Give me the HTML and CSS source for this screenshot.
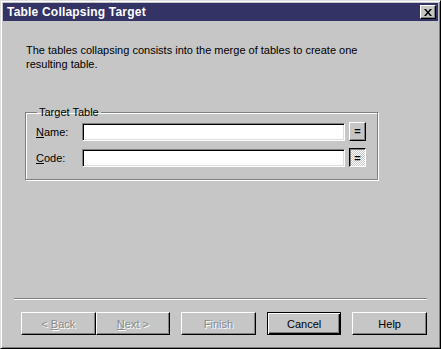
FILE: index.html
```html
<!DOCTYPE html>
<html lang="en">
<head>
    <meta charset="UTF-8">
    <meta name="viewport" content="width=device-width, initial-scale=1.0">
    <title>Table Collapsing Target</title>
    <link rel="stylesheet" href="styles.css">
</head>
<body>
    <div class="window">
        <div class="titlebar">
            <span class="title">Table Collapsing Target</span>
            <span class="close">
                <svg width="8" height="7" viewBox="0 0 8 7">
                    <path d="M0 0h2l2 2.5L6 0h2L5 3.5 8 7H6L4 4.5 2 7H0l3-3.5z" fill="#000"/>
                </svg>
            </span>
        </div>
        <div class="content">
            <p class="intro">The tables collapsing consists into the merge of tables to create one resulting table.</p>
            <fieldset class="group">
                <legend>Target Table</legend>
                <div class="row">
                    <label for="name"><u>N</u>ame:</label>
                    <input type="text" id="name">
                    <button class="eq">=</button>
                </div>
                <div class="row">
                    <label for="code"><u>C</u>ode:</label>
                    <input type="text" id="code">
                    <button class="eq pressed">=</button>
                </div>
            </fieldset>
        </div>
        <div class="footer">
            <div class="separator"></div>
            <div class="buttons">
                <button class="btn" disabled>&lt; <u>B</u>ack</button>
                <button class="btn next" disabled><u>N</u>ext &gt;</button>
                <button class="btn gap" disabled>Finish</button>
                <button class="btn gap default">Cancel</button>
                <button class="btn gap">Help</button>
            </div>
        </div>
    </div>
</body>
</html>
```

FILE: styles.css
```css
body {
    margin: 0;
    background: #c6c6c6;
    font-family: "Liberation Sans", Arial, sans-serif;
    font-size: 11px;
    color: #000;
}
.window {
    width: 441px;
    height: 349px;
    box-sizing: border-box;
    display: flex;
    flex-direction: column;
    background: #c6c6c6;
    border: 1px solid;
    border-color: #dedede #000 #000 #dedede;
    box-shadow: inset 1px 1px #fff, inset -1px -1px #808080;
    padding: 2px 2px 2px 2px;
}
.titlebar {
    height: 18px;
    background: #333366;
    display: flex;
    align-items: center;
    justify-content: space-between;
    padding: 0 2px 0 4px;
}
.title {
    color: #fff;
    font-weight: bold;
    font-size: 12px;
    letter-spacing: 0.2px;
}
.close {
    width: 14px;
    height: 12px;
    background: #c6c6c6;
    border: 1px solid;
    border-color: #fff #000 #000 #fff;
    box-shadow: inset -1px -1px #808080;
    display: flex;
    align-items: center;
    justify-content: center;
}
.content {
    padding: 22px 0 0 23px;
}
.intro {
    margin: 0;
    width: 360px;
    line-height: 14px;
}
.group {
    margin: 34px 0 0 -1px;
    width: 331px;
    padding: 0 10px 12px 10px;
    border: 1px solid #808080;
    box-shadow: inset 1px 1px #fff, 1px 1px #fff;
}
.group legend {
    padding: 0 2px;
    margin-left: 1px;
    line-height: 14px;
}
.row {
    display: flex;
    align-items: center;
    height: 19px;
    margin-top: 3px;
}
.row + .row {
    margin-top: 7px;
}
.row label {
    width: 46px;
}
.row input {
    width: 263px;
    height: 18px;
    box-sizing: border-box;
    border: 1px solid;
    border-color: #808080 #fff #fff #808080;
    box-shadow: inset 1px 1px #000, inset -1px -1px #dedede;
    background: #fff;
    padding: 0 3px;
    font: inherit;
    outline: none;
}
.eq {
    width: 17px;
    height: 19px;
    margin-left: 4px;
    padding: 0;
    box-sizing: border-box;
    border: 1px solid;
    border-color: #fff #000 #000 #fff;
    box-shadow: inset -1px -1px #808080;
    background: #c6c6c6;
    font: bold 11px "Liberation Sans", Arial, sans-serif;
    line-height: 15px;
}
.eq.pressed {
    border-color: #000 #fff #fff #000;
    box-shadow: inset 1px 1px #808080;
    background: repeating-conic-gradient(#fff 0 25%, #c6c6c6 0 50%) 0 0 / 2px 2px;
    padding-top: 2px;
}
.footer {
    margin-top: auto;
    padding: 0 11px 11px 11px;
}
.separator {
    height: 1px;
    background: #808080;
    border-bottom: 1px solid #fff;
}
.buttons {
    display: flex;
    margin-top: 12px;
    padding-left: 7px;
}
.btn {
    width: 75px;
    height: 23px;
    box-sizing: border-box;
    border: 1px solid;
    border-color: #fff #000 #000 #fff;
    box-shadow: inset -1px -1px #808080;
    background: #c6c6c6;
    font: 11px "Liberation Sans", Arial, sans-serif;
    color: #000;
    padding: 0;
}
.btn:disabled {
    color: #8a8a8a;
    text-shadow: 1px 1px #fff;
}
.btn.gap {
    margin-left: 11px;
}
.btn.default {
    border: 1px solid #000;
    box-shadow: inset 1px 1px #fff, inset -1px -1px #000, inset -2px -2px #808080;
}
```
